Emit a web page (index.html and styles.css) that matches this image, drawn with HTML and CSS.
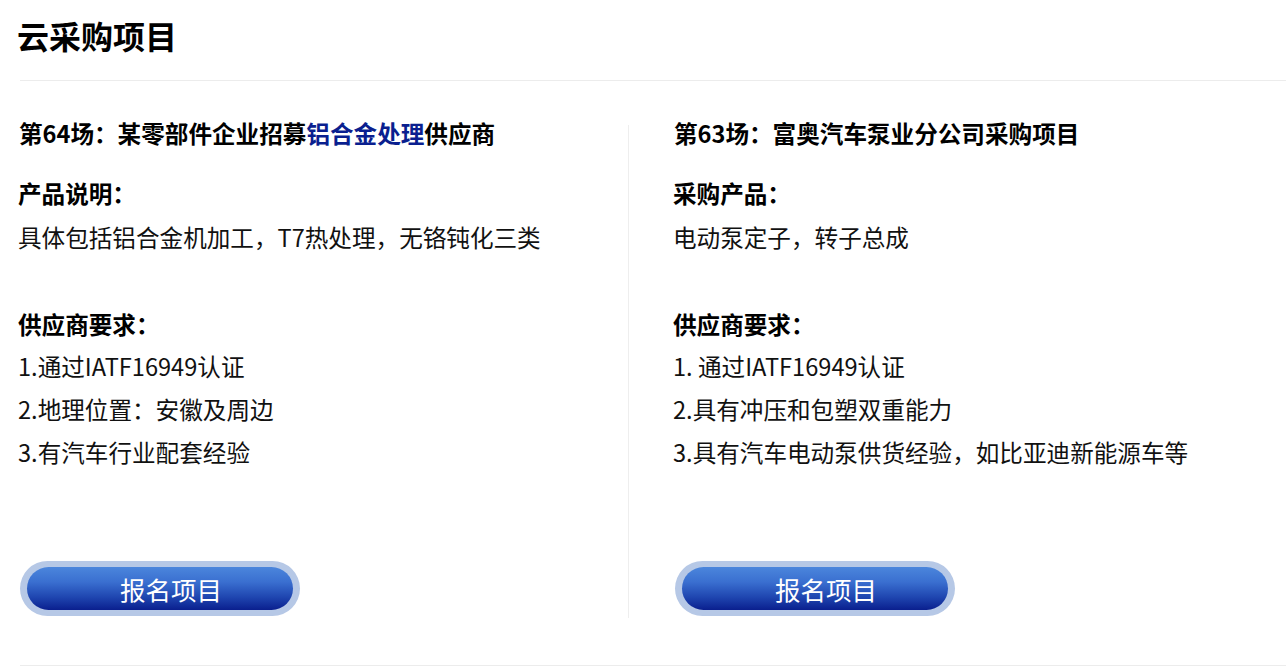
FILE: index.html
```html
<!DOCTYPE html>
<html lang="zh-CN">
<head>
<meta charset="utf-8">
<title>云采购项目</title>
<link rel="stylesheet" href="styles.css">
</head>
<body>
<div class="page">
  <div class="header">
    <h1 class="title">云采购项目</h1>
  </div>
  <div class="projects">
    <div class="project">
      <h2 class="p-title">第64场：某零部件企业招募<span class="hl">铝合金处理</span>供应商</h2>
      <div class="label first">产品说明：</div>
      <div class="text desc">具体包括铝合金机加工，T7热处理，无铬钝化三类</div>
      <div class="label second">供应商要求：</div>
      <div class="text">1.通过IATF16949认证</div>
      <div class="text">2.地理位置：安徽及周边</div>
      <div class="text">3.有汽车行业配套经验</div>
      <div class="btn-wrap"><a class="btn" href="#">报名项目</a></div>
    </div>
    <div class="divider"></div>
    <div class="project right">
      <h2 class="p-title">第63场：富奥汽车泵业分公司采购项目</h2>
      <div class="label first">采购产品：</div>
      <div class="text desc">电动泵定子，转子总成</div>
      <div class="label second">供应商要求：</div>
      <div class="text">1. 通过IATF16949认证</div>
      <div class="text">2.具有冲压和包塑双重能力</div>
      <div class="text">3.具有汽车电动泵供货经验，如比亚迪新能源车等</div>
      <div class="btn-wrap"><a class="btn" href="#">报名项目</a></div>
    </div>
  </div>
</div>
</body>
</html>
```

FILE: styles.css
```css
* { box-sizing: border-box; }
html, body {
  margin: 0;
  padding: 0;
  background: #fff;
}
body {
  font-family: "Noto Sans CJK SC", "Noto Sans", sans-serif;
  color: #111;
}
.page {
  width: 1286px;
  height: 669px;
  overflow: hidden;
}
.header {
  margin-left: 20px;
  border-bottom: 1px solid #ececec;
  height: 81px;
  padding-top: 14px;
}
.title {
  margin: 0 0 0 -3px;
  font-size: 32px;
  line-height: 42px;
  font-weight: 700;
  color: #000;
}
.projects {
  display: grid;
  grid-template-columns: 608px 1px 1fr;
  margin-left: 20px;
  padding-top: 31px;
  padding-bottom: 47px;
  border-bottom: 1px solid #ececec;
}
.divider {
  background: #eeeeee;
  margin-top: 13px;
  height: 493px;
}
.project {
  display: flex;
  flex-direction: column;
}
.project.right {
  padding-left: 46px;
}
.p-title {
  margin: 0 0 0 -1px;
  font-size: 23.6px;
  line-height: 43px;
  font-weight: 700;
  color: #000;
  white-space: nowrap;
}
.hl { color: #0a1f8f; }
.label {
  margin-left: -2px;
  font-size: 23.6px;
  line-height: 44px;
  font-weight: 700;
  color: #000;
}
.label.first { margin-top: 16px; }
.label.second { margin-top: 43.5px; line-height: 42px; }
.text {
  margin-left: -2px;
  font-size: 23.6px;
  line-height: 43px;
  color: #111;
  white-space: nowrap;
}
.text.desc { margin-top: 1px; }
.btn-wrap {
  margin-top: 87px;
  width: 280px;
  height: 55px;
  border-radius: 28px;
  background: #b6c8e6;
  padding: 6px 7px;
}
.btn {
  display: block;
  height: 43px;
  border-radius: 22px;
  background: linear-gradient(to bottom, #4b86dc 0%, #3a6fd0 35%, #1f46b0 70%, #0a1f8e 100%);
  color: #fff;
  text-decoration: none;
  text-align: center;
  padding-left: 22px;
  font-size: 25.5px;
  line-height: 43px;
}
```
